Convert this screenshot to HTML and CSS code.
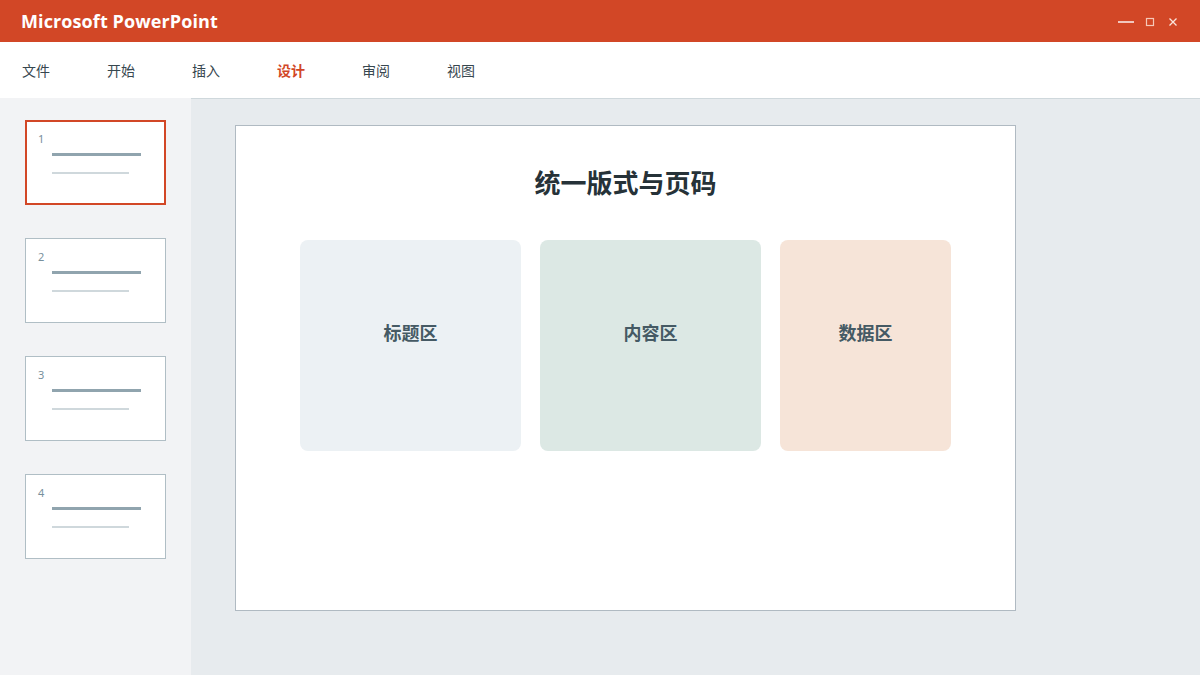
FILE: index.html
```html
<!DOCTYPE html>
<html lang="zh-CN">
<head>
<meta charset="utf-8">
<title>Microsoft PowerPoint</title>
<link rel="stylesheet" href="styles.css">
</head>
<body>
<div class="app">
  <header class="titlebar">
    <div class="app-name">Microsoft PowerPoint</div>
    <div class="win-controls">
      <svg class="ctl ctl-min" width="16" height="10" viewBox="0 0 16 10"><line x1="0" y1="5" x2="16" y2="5" stroke="#fff" stroke-width="1.4"/></svg>
      <svg class="ctl ctl-max" width="10" height="10" viewBox="0 0 10 10"><rect x="1.5" y="1.5" width="7" height="7" fill="none" stroke="#f6c8b8" stroke-width="1.2"/></svg>
      <svg class="ctl ctl-close" width="10" height="10" viewBox="0 0 10 10"><path d="M1.5 1.5 L8.5 8.5 M8.5 1.5 L1.5 8.5" stroke="#fbe4dc" stroke-width="1.3"/></svg>
    </div>
  </header>
  <nav class="menubar">
    <span class="menu-item">文件</span>
    <span class="menu-item">开始</span>
    <span class="menu-item">插入</span>
    <span class="menu-item active">设计</span>
    <span class="menu-item">审阅</span>
    <span class="menu-item">视图</span>
  </nav>
  <div class="workspace">
    <aside class="sidebar">
      <div class="thumb selected">
        <div class="thumb-num">1</div>
        <div class="thumb-line main"></div>
        <div class="thumb-line sub"></div>
      </div>
      <div class="thumb">
        <div class="thumb-num">2</div>
        <div class="thumb-line main"></div>
        <div class="thumb-line sub"></div>
      </div>
      <div class="thumb">
        <div class="thumb-num">3</div>
        <div class="thumb-line main"></div>
        <div class="thumb-line sub"></div>
      </div>
      <div class="thumb">
        <div class="thumb-num">4</div>
        <div class="thumb-line main"></div>
        <div class="thumb-line sub"></div>
      </div>
    </aside>
    <main class="canvas">
      <section class="slide">
        <h1 class="slide-title">统一版式与页码</h1>
        <div class="zones">
          <div class="zone zone-title">标题区</div>
          <div class="zone zone-content">内容区</div>
          <div class="zone zone-data">数据区</div>
        </div>
      </section>
    </main>
  </div>
</div>
</body>
</html>
```

FILE: styles.css
```css
* { box-sizing: border-box; }
html, body {
  margin: 0;
  padding: 0;
  width: 1200px;
  height: 675px;
  overflow: hidden;
  font-family: "Noto Sans", "Noto Sans CJK SC", sans-serif;
}
.app {
  display: flex;
  flex-direction: column;
  width: 1200px;
  height: 675px;
}
.titlebar {
  height: 42px;
  background: #d24726;
  display: flex;
  align-items: center;
  justify-content: space-between;
  padding: 0 22px 0 21px;
  flex: none;
}
.app-name {
  color: #fff;
  font-family: "Open Sans", "Noto Sans", sans-serif;
  font-weight: 700;
  font-size: 18px;
  letter-spacing: 0.1px;
}
.win-controls {
  display: flex;
  align-items: center;
  margin-top: 1px;
}
.ctl { display: block; }
.ctl-min { margin-right: 11px; }
.ctl-max { margin-right: 13px; }
.menubar {
  height: 56px;
  background: #fff;
  display: flex;
  align-items: center;
  padding-left: 22px;
  flex: none;
}
.menu-item {
  width: 85px;
  font-family: "Noto Sans CJK SC", sans-serif;
  font-size: 14px;
  color: #37474f;
}
.menu-item.active {
  color: #d24726;
  font-weight: 700;
}
.workspace {
  flex: 1;
  display: flex;
  min-height: 0;
}
.sidebar {
  width: 191px;
  flex: none;
  background: #f2f3f5;
  padding: 22px 0 0 25px;
  display: flex;
  flex-direction: column;
  gap: 33px;
}
.thumb {
  width: 141px;
  height: 85px;
  background: #fff;
  border: 1px solid #b0bec5;
  padding: 11px 12px 10px;
}
.thumb.selected {
  border: 2px solid #d24726;
  padding: 10px 11px 9px;
}
.thumb-num {
  font-family: "Noto Sans", sans-serif;
  font-size: 11px;
  line-height: 14px;
  color: #78909c;
}
.thumb-line { margin-left: 14px; }
.thumb-line.main {
  width: 89px;
  height: 3px;
  background: #90a4ae;
  margin-top: 7px;
}
.thumb-line.sub {
  width: 77px;
  height: 2px;
  background: #cfd8dc;
  margin-top: 16px;
}
.canvas {
  flex: 1;
  background: #e7ebee;
  border-top: 1px solid #cfd8dc;
  padding: 26px 0 0 44px;
}
.slide {
  width: 781px;
  height: 486px;
  background: #fff;
  border: 1px solid #b0bac2;
  padding: 38px 64px 0 64px;
}
.slide-title {
  margin: 0;
  text-align: center;
  font-family: "Noto Sans CJK SC", sans-serif;
  font-weight: 700;
  font-size: 26px;
  line-height: 36px;
  color: #263238;
}
.zones {
  display: flex;
  gap: 19px;
  margin-top: 40px;
}
.zone {
  height: 211px;
  border-radius: 8px;
  display: flex;
  align-items: center;
  justify-content: center;
  font-family: "Noto Sans CJK SC", sans-serif;
  font-weight: 700;
  font-size: 18px;
  color: #455a64;
  padding-bottom: 28px;
}
.zone-title { width: 221px; background: #ecf1f4; }
.zone-content { width: 221px; background: #dce8e4; }
.zone-data { width: 171px; background: #f6e4d8; }
```
